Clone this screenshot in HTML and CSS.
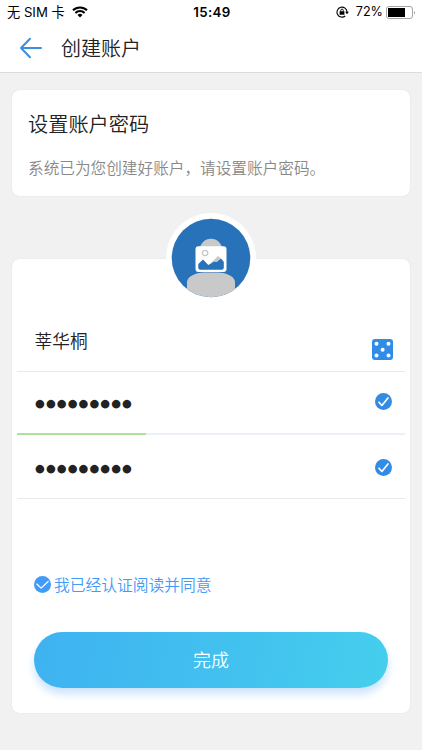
FILE: index.html
```html
<!DOCTYPE html>
<html lang="zh-CN">
<head>
<meta charset="utf-8">
<meta name="viewport" content="width=device-width, initial-scale=1">
<title>创建账户</title>
<link rel="stylesheet" href="styles.css">
</head>
<body>
<header class="header">
  <div class="status">
    <div class="status-left">
      <span class="carrier">无 SIM 卡</span>
      <svg class="wifi" viewBox="0 0 16 12" width="16" height="12"><path d="M8 11.6 5.5 9a3.6 3.6 0 0 1 5 0z"/><path d="M3.4 6.9a6.6 6.6 0 0 1 9.2 0M1 4.3a10 10 0 0 1 14 0" fill="none" stroke="#000" stroke-width="2.1"/></svg>
    </div>
    <time class="time">15:49</time>
    <div class="status-right">
      <svg class="lock" viewBox="0 0 13 12" width="13" height="12"><path d="M9.2 10A5 5 0 1 1 11 6" fill="none" stroke="#000" stroke-width="1.1"/><path d="M9.1 5.7h3.8L11 8.2zM3.6 5.2h4.8v3.5H3.6z"/><path d="M4.8 5.6V4.3a1.25 1.25 0 0 1 2.5 0v1.3" fill="none" stroke="#000" stroke-width=".9"/></svg>
      <span class="percent">72%</span>
      <svg class="battery" viewBox="0 0 30 13" width="30" height="13"><rect x=".5" y=".5" width="26" height="12" rx="2.5" fill="#fff" stroke="#a5a5a5"/><path d="M2 2h17v9H2z"/><path d="M28 4.5q1.5 2 0 4z" fill="#888"/></svg>
    </div>
  </div>
  <nav class="nav">
    <svg class="back" viewBox="0 0 24 22" width="24" height="22"><path d="M11 1.8 2 11l9 9.2M2.2 11H22" /></svg>
    <h1>创建账户</h1>
  </nav>
</header>
<main>
  <section class="card intro">
    <h2>设置账户密码</h2>
    <p>系统已为您创建好账户，请设置账户密码。</p>
  </section>
  <form class="card form">
    <svg class="avatar" viewBox="0 0 90 90" width="90" height="90">
      <defs><clipPath id="disc"><circle cx="45" cy="45" r="39.3"/></clipPath></defs>
      <circle cx="45" cy="45" r="45" fill="#fff"/>
      <g clip-path="url(#disc)">
        <path d="M5 5h80v80H5z" fill="#2872b9"/>
        <circle cx="45" cy="37" r="11.2" fill="#c9c9c9"/>
        <path d="M21 86V69c0-5 8-9.5 17-9.5h14c9 0 17 4.5 17 9.5v17z" fill="#c9c9c9"/>
      </g>
      <rect x="29.5" y="33.3" width="31" height="25.7" rx="3" fill="#fff"/>
      <circle cx="39.1" cy="40" r="2.7" fill="#fff" stroke="#c9c9c9" stroke-width="1.3"/>
      <path d="m45 50 7-7 5 4-5 4z" fill="#c9c9c9"/>
      <path d="M32.3 51 37 46.5l5.3 5.4 5.5-3.2 3 .3 4-3.2 3 3v6q0 2-2 2H34.3q-2 0-2-2z" fill="#2872b9"/>
    </svg>
    <div class="field name"><span>莘华桐</span>
      <svg class="dice" viewBox="0 0 21 21" width="21" height="21"><rect width="21" height="21" rx="3" fill="#328ce6"/><g fill="#fff"><circle cx="4.5" cy="4.7" r="2"/><circle cx="16.5" cy="4.7" r="2"/><circle cx="10.6" cy="10.7" r="2"/><circle cx="4.5" cy="16.4" r="2"/><circle cx="16.5" cy="16.4" r="2"/></g></svg>
    </div>
    <div class="field password strength"><span class="dots">●●●●●●●●●</span>
      <svg class="check" viewBox="0 0 18 18" width="17" height="17"><circle cx="9" cy="9" r="9"/><path d="m4.2 9.8 3.1 3.4 6.4-8"/></svg>
    </div>
    <div class="field confirm"><span class="dots">●●●●●●●●●</span>
      <svg class="check" viewBox="0 0 18 18" width="17" height="17"><circle cx="9" cy="9" r="9"/><path d="m4.2 9.8 3.1 3.4 6.4-8"/></svg>
    </div>
    <div class="agree">
      <svg viewBox="0 0 18 18" width="17" height="17"><circle cx="9" cy="9" r="9"/><path d="m3 8.5 4.5 4.3 7.5-7"/></svg>
      <span>我已经认证阅读并同意</span>
    </div>
    <button class="submit" type="button">完成</button>
  </form>
</main>
</body>
</html>
```
FILE: styles.css
```css
* { box-sizing: border-box; }
body {
  margin: 0;
  height: 750px;
  overflow: hidden;
  background: #f1f1f1;
  color: #222;
  font-family: "Noto Sans CJK SC", sans-serif;
  font-weight: 350;
}
svg { display: block; flex: none; }
h1, h2, p { margin: 0; font-weight: inherit; }
.header { height: 73px; background: #fff; border-bottom: 1px solid #dcdcdc; }
.status {
  display: grid;
  grid-template-columns: 1fr auto 1fr;
  align-items: center;
  height: 24px;
  padding: 0 6px 0 7px;
  color: #000;
  font: 400 12.5px/24px Inter, "Noto Sans CJK SC", sans-serif;
}
.status-left, .status-right { display: flex; align-items: center; }
.status-left { gap: 7px; }
.status-right { justify-content: flex-end; }
.carrier { font-size: 13.2px; white-space: nowrap; }
.time { padding-left: 1px; font-size: 13.3px; font-weight: 600; letter-spacing: .35px; }
.percent { margin: 0 3px 0 7px; font-size: 12.6px; }
.nav { display: flex; align-items: center; height: 48px; padding-left: 19px; }
.nav h1 { margin-left: 18px; font-size: 20px; line-height: 30px; }
.back { fill: none; stroke: #3c8ee0; stroke-width: 2; stroke-linecap: round; stroke-linejoin: round; }
main { padding: 17px 12px 0; }
.card { background: #fff; border-radius: 7px; box-shadow: 0 0 1px #ccc; }
.intro { height: 106px; padding: 18px 16px; }
.intro h2 { font-size: 20.2px; line-height: 32px; }
.intro p { margin-top: 16px; color: #888; font-size: 15.65px; line-height: 24px; white-space: nowrap; }
.form { display: flex; flex-direction: column; height: 454px; margin-top: 63px; padding: 0 5px; }
.avatar { align-self: center; margin-top: -46px; }
.field {
  display: flex;
  align-items: center;
  justify-content: space-between;
  padding: 0 13px 0 18px;
  border-bottom: 1px solid #e7e9ee;
}
.name { height: 69px; padding: 0 12px 0 17.5px; font-size: 17.7px; }
.name span { margin-top: 6px; }
.dice { margin-top: 24px; }
.password { height: 63px; }
.confirm { height: 64px; }
.password .dots { margin-top: 3px; }
.confirm .dots { margin-top: 5px; }
.password .check { margin-top: -3px; }
.confirm .check { margin-top: 2px; }
.strength { border-bottom: 2px solid; border-image: linear-gradient(to right, #aee29c 0 129px, #edf0f7 129px) 0 0 2 0; }
.dots { font: 11.2px/20px "DejaVu Sans", sans-serif; letter-spacing: 1.12px; }
.check circle { fill: #328ce6; }
.check path, .agree path { fill: none; stroke: #fff; stroke-width: 1.8; stroke-linecap: round; stroke-linejoin: round; }
.agree { display: flex; align-items: center; gap: 3px; height: 24px; margin: 73px 17px 0; color: #439bf8; font-size: 15.75px; }
.agree circle { fill: #439bf8; }
.agree path { stroke-width: 1.3; }
.submit {
  height: 56px;
  margin: 36px 17px 0;
  padding: 0 0 2px;
  border: 0;
  border-radius: 28px;
  background: linear-gradient(100deg, #3eb2f1, #45ceed);
  box-shadow: 0 6px 8px #cbe3fd;
  color: #fff;
  font: 350 18px/54px "Noto Sans CJK SC", sans-serif;
}
```
